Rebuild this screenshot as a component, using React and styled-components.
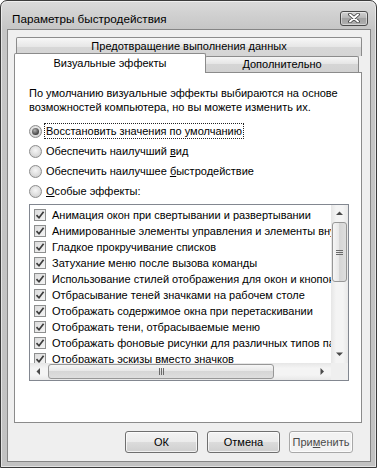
import React from 'react';
import styled, { createGlobalStyle } from 'styled-components';

const GlobalStyle = createGlobalStyle`
	html, body {
		margin: 0;
		padding: 0;
		background: #ffffff;
	}

	body {
		font-family: 'Liberation Sans', Arial, sans-serif;
		font-size: 11px;
		color: #000;
	}

	* {
		box-sizing: border-box;
	}
`;

const Window = styled.div`
	width: 377px;
	height: 468px;
	display: flex;
	flex-direction: column;
	border: 1px solid #3a3a3a;
	border-radius: 7px 7px 0 0;
	background: linear-gradient(#dadada, #c6c6c6 28px, #c2c2c2);
	box-shadow: inset 0 0 0 1px rgba(255, 255, 255, 0.55);
	overflow: hidden;
`;

const TitleBar = styled.div`
	height: 28px;
	flex: none;
	display: flex;
	align-items: center;
	justify-content: space-between;
	padding: 6px 8px 0 11px;
	font-size: 11.7px;
`;

const CloseButton = styled.div`
	width: 28px;
	height: 15px;
	display: flex;
	align-items: center;
	justify-content: center;
	border: 1px solid #4a4a4a;
	border-radius: 3px;
	background: linear-gradient(#d2d2d2, #b4b4b4 50%, #a2a2a2 50%, #b0b0b0);
	box-shadow: inset 0 0 0 1px rgba(255, 255, 255, 0.45);
`;

const Client = styled.div`
	flex: 1;
	margin: 0 5px 5px 6px;
	padding: 7px 8px 8px 6px;
	display: flex;
	flex-direction: column;
	border: 1px solid #858585;
	background: #efefef;
`;

const BackRow = styled.div`
	display: flex;
	height: 19px;
	margin-bottom: -3px;
	padding-left: 2px;
`;

const TabBase = styled.div`
	display: flex;
	justify-content: center;
	border: 1px solid #8b8b8b;
	border-bottom: none;
	border-radius: 2px 2px 0 0;
	white-space: nowrap;
`;

const BackTab = styled(TabBase)`
	width: 346px;
	padding-top: 2px;
	background: linear-gradient(#f7f7f7, #e6e6e6 50%, #d7d7d7 50%, #d4d4d4);
`;

const FrontRow = styled.div`
	display: flex;
	align-items: flex-end;
	height: 19px;
	position: relative;
`;

const Tab = styled(TabBase)`
	width: ${({ $width }) => $width}px;
	height: ${({ $active }) => ($active ? 20 : 16)}px;
	margin-bottom: ${({ $active }) => ($active ? -1 : 0)}px;
	margin-left: ${({ $active }) => ($active ? 0 : -1)}px;
	padding-top: ${({ $active }) => ($active ? 3 : 1)}px;
	position: relative;
	z-index: ${({ $active }) => ($active ? 2 : 1)};
	background: ${({ $active }) =>
		$active ? '#ffffff' : 'linear-gradient(#f5f5f5, #e4e4e4 50%, #d5d5d5 50%, #d2d2d2)'};
`;

const Panel = styled.div`
	height: 351px;
	padding: 13px 12px 0 14px;
	border: 1px solid #8b8b8b;
	background: #ffffff;
`;

const Intro = styled.p`
	margin: 0;
	line-height: 14px;
	white-space: nowrap;
`;

const RadioList = styled.div`
	margin-top: 7px;
	display: flex;
	flex-direction: column;
`;

const RadioRow = styled.div`
	height: 20px;
	display: flex;
	align-items: center;
	gap: 2px;
`;

const RadioCircle = styled.span`
	width: 13px;
	height: 13px;
	flex: none;
	display: flex;
	align-items: center;
	justify-content: center;
	border: 1px solid #8c8c8c;
	border-radius: 50%;
	background: radial-gradient(circle at 50% 40%, #f6f6f6 0, #dedede 55%, #c8c8c8 100%);

	&::after {
		content: '';
		display: ${({ $checked }) => ($checked ? 'block' : 'none')};
		width: 7px;
		height: 7px;
		border-radius: 50%;
		background: radial-gradient(circle at 40% 35%, #b0b0b0, #3a3a3a 75%);
	}
`;

const RadioLabel = styled.span`
	padding: 0 1px;
	line-height: 14px;
	border: 1px dotted ${({ $focused }) => ($focused ? '#222' : 'transparent')};
	white-space: nowrap;
`;

const ListBox = styled.div`
	width: 320px;
	height: 177px;
	margin-top: 3px;
	display: grid;
	grid-template-columns: 1fr 17px;
	grid-template-rows: 1fr 17px;
	border: 1px solid #828790;
	background: #ffffff;
`;

const Items = styled.div`
	overflow: hidden;
	padding: 2px 0 0 4px;
`;

const Item = styled.div`
	height: 16px;
	display: flex;
	align-items: center;
	gap: 6px;
	white-space: nowrap;
`;

const CheckBox = styled.span`
	width: 12px;
	height: 12px;
	flex: none;
	display: flex;
	align-items: center;
	justify-content: center;
	border: 1px solid #8e8f8f;
	background: linear-gradient(135deg, #dcdcdc, #f4f4f4);
`;

const VTrack = styled.div`
	display: flex;
	flex-direction: column;
	background: linear-gradient(90deg, #e6e6e6, #f4f4f4 30%, #f4f4f4 70%, #e8e8e8);
`;

const HTrack = styled.div`
	display: flex;
	align-items: center;
	background: linear-gradient(#e6e6e6, #f4f4f4 30%, #f4f4f4 70%, #e8e8e8);
`;

const ArrowButton = styled.div`
	width: 17px;
	height: 17px;
	flex: none;
	display: flex;
	align-items: center;
	justify-content: center;
`;

const Thumb = styled.div`
	display: flex;
	align-items: center;
	justify-content: center;
	border: 1px solid #979797;
	border-radius: 3px;
	${({ $vertical }) =>
		$vertical
			? `
		width: 15px;
		height: 60px;
		margin: 0 1px;
		background: linear-gradient(90deg, #f6f6f6, #e6e6e6 50%, #d6d6d6 50%, #dedede);
	`
			: `
		width: 226px;
		height: 15px;
		margin-left: 1px;
		background: linear-gradient(#f6f6f6, #e6e6e6 50%, #d6d6d6 50%, #dedede);
	`}
`;

const Spacer = styled.div`
	flex: 1;
`;

const Corner = styled.div`
	background: #efefef;
`;

const ButtonRow = styled.div`
	margin-top: 8px;
	padding-right: 9px;
	display: flex;
	justify-content: flex-end;
	gap: 9px;
`;

const Button = styled.div`
	width: ${({ $width }) => $width}px;
	height: 22px;
	display: flex;
	align-items: center;
	justify-content: center;
	border: 1px solid ${({ $disabled }) => ($disabled ? '#a8a8a8' : '#6f6f6f')};
	border-radius: 3px;
	color: ${({ $disabled }) => ($disabled ? '#4a4a4a' : '#000')};
	background: ${({ $disabled }) =>
		$disabled ? '#f2f2f2' : 'linear-gradient(#f3f3f3, #ebebeb 50%, #dcdcdc 50%, #cfcfcf)'};
	box-shadow: inset 0 0 0 1px rgba(255, 255, 255, 0.7);
`;

const CloseGlyph = () => (
	<svg width="14" height="10" viewBox="0 0 14 10">
		<path d="M3 1.5 L11 8.5 M11 1.5 L3 8.5" stroke="#3a3a3a" strokeWidth="3.6" strokeLinecap="round" />
		<path d="M3 1.5 L11 8.5 M11 1.5 L3 8.5" stroke="#ffffff" strokeWidth="2" strokeLinecap="round" />
	</svg>
);

const Check = () => (
	<svg width="10" height="10" viewBox="0 0 10 10">
		<path d="M1.5 5.2 L4 7.8 L8.6 1.8" fill="none" stroke="#3c3c3c" strokeWidth="1.7" />
	</svg>
);

const Arrow = ({ dir }) => {
	const points = {
		up: '0,4 3.5,0.5 7,4',
		down: '0,0.5 3.5,4 7,0.5',
		left: '4,0 0.5,3.5 4,7',
		right: '0.5,0 4,3.5 0.5,7',
	}[dir];
	const vertical = dir === 'up' || dir === 'down';
	return (
		<svg width={vertical ? 7 : 5} height={vertical ? 5 : 7} viewBox={vertical ? '0 0 7 5' : '0 0 5 7'}>
			<polygon points={points} fill="#4a4a4a" />
		</svg>
	);
};

const Grip = ({ vertical }) => (
	<svg width="7" height="7" viewBox="0 0 7 7">
		{[1, 3, 5].map(p =>
			vertical ? (
				<line key={p} x1="0" y1={p + 0.5} x2="7" y2={p + 0.5} stroke="#6a6a6a" strokeWidth="1" />
			) : (
				<line key={p} x1={p + 0.5} y1="0" x2={p + 0.5} y2="7" stroke="#6a6a6a" strokeWidth="1" />
			)
		)}
	</svg>
);

const radios = [
	{ key: 'default', label: 'Восстановить значения по умолчанию', checked: true },
	{ key: 'look', label: <>Обеспечить наилучший <u>в</u>ид</> },
	{ key: 'speed', label: <>Обеспечить наилучшее <u>б</u>ыстродействие</> },
	{ key: 'custom', label: <><u>О</u>собые эффекты:</> },
];

const effects = [
	'Анимация окон при свертывании и развертывании',
	'Анимированные элементы управления и элементы внутри окна',
	'Гладкое прокручивание списков',
	'Затухание меню после вызова команды',
	'Использование стилей отображения для окон и кнопок',
	'Отбрасывание теней значками на рабочем столе',
	'Отображать содержимое окна при перетаскивании',
	'Отображать тени, отбрасываемые меню',
	'Отображать фоновые рисунки для различных типов папок',
	'Отображать эскизы вместо значков',
];

const App = () => (
	<>
		<GlobalStyle />
		<Window>
			<TitleBar>
				<span>Параметры быстродействия</span>
				<CloseButton>
					<CloseGlyph />
				</CloseButton>
			</TitleBar>
			<Client>
				<BackRow>
					<BackTab>Предотвращение выполнения данных</BackTab>
				</BackRow>
				<FrontRow>
					<Tab $active $width={192}>
						Визуальные эффекты
					</Tab>
					<Tab $width={154}>Дополнительно</Tab>
				</FrontRow>
				<Panel>
					<Intro>
						По умолчанию визуальные эффекты выбираются на основе
						<br />
						возможностей компьютера, но вы можете изменить их.
					</Intro>
					<RadioList>
						{radios.map(r => (
							<RadioRow key={r.key}>
								<RadioCircle $checked={r.checked} />
								<RadioLabel $focused={r.checked}>{r.label}</RadioLabel>
							</RadioRow>
						))}
					</RadioList>
					<ListBox>
						<Items>
							{effects.map(text => (
								<Item key={text}>
									<CheckBox>
										<Check />
									</CheckBox>
									{text}
								</Item>
							))}
						</Items>
						<VTrack>
							<ArrowButton>
								<Arrow dir="up" />
							</ArrowButton>
							<Thumb $vertical>
								<Grip vertical />
							</Thumb>
							<Spacer />
							<ArrowButton>
								<Arrow dir="down" />
							</ArrowButton>
						</VTrack>
						<HTrack>
							<ArrowButton>
								<Arrow dir="left" />
							</ArrowButton>
							<Thumb>
								<Grip />
							</Thumb>
							<Spacer />
							<ArrowButton>
								<Arrow dir="right" />
							</ArrowButton>
						</HTrack>
						<Corner />
					</ListBox>
				</Panel>
				<ButtonRow>
					<Button $width={73}>ОК</Button>
					<Button $width={73}>Отмена</Button>
					<Button $width={64} $disabled>
						При<u>м</u>енить
					</Button>
				</ButtonRow>
			</Client>
		</Window>
	</>
);

export default App;
